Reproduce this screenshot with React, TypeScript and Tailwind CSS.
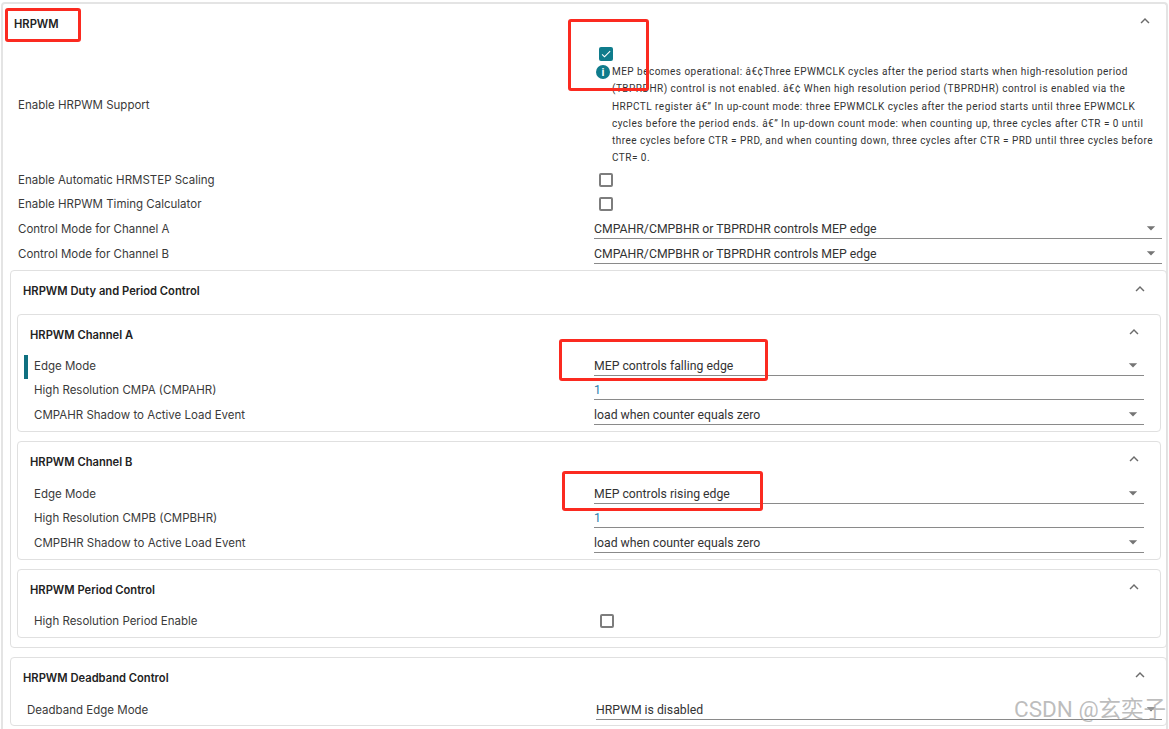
import React from 'react';

const CHANNELS = [
  {
    title: 'HRPWM Channel A',
    edge: 'MEP controls falling edge',
    hrLabel: 'High Resolution CMPA (CMPAHR)',
    shadowLabel: 'CMPAHR Shadow to Active Load Event',
    marked: true,
  },
  {
    title: 'HRPWM Channel B',
    edge: 'MEP controls rising edge',
    hrLabel: 'High Resolution CMPB (CMPBHR)',
    shadowLabel: 'CMPBHR Shadow to Active Load Event',
    marked: false,
  },
];

const HELP_TEXT =
  'MEP becomes operational: â€¢Three EPWMCLK cycles after the period starts when high-resolution period (TBPRDHR) control is not enabled. â€¢ When high resolution period (TBPRDHR) control is enabled via the HRPCTL register â€\u201D In up-count mode: three EPWMCLK cycles after the period starts until three EPWMCLK cycles before the period ends. â€\u201D In up-down count mode: when counting up, three cycles after CTR = 0 until three cycles before CTR = PRD, and when counting down, three cycles after CTR = PRD until three cycles before CTR= 0.';

const Chevron = () => (
  <svg width="18" height="18" viewBox="0 0 24 24" className="fill-[#6b6b6b] mb-[6px]">
    <path d="M12 8l-6 6 1.41 1.41L12 10.83l4.59 4.58L18 14z" />
  </svg>
);

const Checkbox = ({ checked = false }: { checked?: boolean }) =>
  checked ? (
    <div className="w-[14px] h-[14px] rounded-[2px] bg-[#0f7c8c] flex items-center justify-center">
      <svg width="12" height="12" viewBox="0 0 24 24" className="fill-white">
        <path d="M9 16.17L4.83 12l-1.42 1.41L9 19 21 7l-1.41-1.41z" />
      </svg>
    </div>
  ) : (
    <div className="w-[14px] h-[14px] rounded-[2px] border-2 border-[#7d7d7d]" />
  );

const Select = ({ value, arrow = true, blue = false }: { value: string; arrow?: boolean; blue?: boolean }) => (
  <div className="h-[19px] flex items-center justify-between border-b border-[#8a8a8a] font-['Roboto',sans-serif] text-[12.25px]">
    <span className={blue ? 'text-[#2a7fb0]' : 'text-[#333333]'}>{value}</span>
    {arrow && (
      <svg width="20" height="20" viewBox="0 0 24 24" className="fill-[#757575] mr-[1px] mb-[2px]">
        <path d="M7 10l5 5 5-5z" />
      </svg>
    )}
  </div>
);

const Row = ({ label, children, bar = false }: { label: string; children: React.ReactNode; bar?: boolean }) => (
  <div className="relative flex items-center h-[24.5px] text-[11.5px] text-[#3a3a3a]">
    {bar && <div className="absolute left-[-10px] top-[1px] w-[4px] h-[24px] bg-[#0f7080]" />}
    <div className="flex-1">{label}</div>
    {children}
  </div>
);

const Heading = ({ title, height, nudge = false }: { title: string; height: string; nudge?: boolean }) => (
  <div className={`flex items-center justify-between ${height}`}>
    <span className={`text-[11.2px] font-semibold text-[#222222] ${nudge ? 'pt-[2px]' : ''}`}>{title}</span>
    <Chevron />
  </div>
);

const App: React.FC = () => {
  return (
    <div className="relative w-[1169px] h-[729px] overflow-hidden bg-white font-['Inter',sans-serif]">
      {/* outer HRPWM card */}
      <div className="mt-[2px] ml-[1px] mr-[1px] border-2 border-b-0 border-[#e4e4e4] rounded-t-[4px] h-[727px]">
        <div className="pl-[11px] pr-[12px]">
          <Heading title="HRPWM" height="h-[40px]" />
        </div>

        <div className="pl-[15px] pr-[4px]">
          <div className="flex items-center h-[124px] text-[11.5px] text-[#3a3a3a]">
            <div className="flex-1 mb-[1px]">Enable HRPWM Support</div>
            <div className="w-[568px] pl-[2px] self-start mt-[3px]">
              <div className="pl-[3px]">
                <Checkbox checked />
              </div>
              <div className="flex mt-[2px]">
                <div className="w-[14px] h-[14px] mt-[2px] shrink-0 rounded-full bg-[#0f7c8c] text-white flex items-center justify-center text-[11px] font-bold leading-none font-['Roboto',sans-serif]">
                  i
                </div>
                <p className="ml-[2px] pr-[4px] text-[10px] leading-[17.25px] tracking-[0.47px] text-[#333333] font-['Roboto',sans-serif]">
                  {HELP_TEXT}
                </p>
              </div>
            </div>
          </div>
          <div className="flex items-center h-[24px] text-[11.5px] text-[#3a3a3a]">
            <div className="flex-1 pt-[2px]">Enable Automatic HRMSTEP Scaling</div>
            <div className="w-[568px] pl-[5px]">
              <Checkbox />
            </div>
          </div>
          <div className="flex items-center h-[24px] text-[11.5px] text-[#3a3a3a]">
            <div className="flex-1 pt-[2px]">Enable HRPWM Timing Calculator</div>
            <div className="w-[568px] pl-[5px]">
              <Checkbox />
            </div>
          </div>
          <div className="mt-[1px]">
            <Row label="Control Mode for Channel A">
              <div className="w-[568px]">
                <Select value="CMPAHR/CMPBHR or TBPRDHR controls MEP edge" />
              </div>
            </Row>
            <div className="mt-[0.5px]">
              <Row label="Control Mode for Channel B">
                <div className="w-[568px]">
                  <Select value="CMPAHR/CMPBHR or TBPRDHR controls MEP edge" />
                </div>
              </Row>
            </div>
          </div>
        </div>

        {/* Duty and Period */}
        <div className="mt-[3.5px] ml-[7px] mr-[-1px] border border-[#e0e0e0] rounded-[4px] pl-[6px] pr-[5px] h-[378px]">
          <div className="pl-[6px] pr-[12px]">
            <Heading title="HRPWM Duty and Period Control" height="h-[41px]" />
          </div>
          <div className="flex flex-col gap-[9px] mt-[2px]">
            {CHANNELS.map((ch) => (
              <div
                key={ch.title}
                className={`border border-[#e0e0e0] rounded-[4px] ${ch.marked ? 'h-[118px]' : 'h-[119px]'}`}
              >
                <div className="pl-[12px] pr-[17px]">
                  <Heading title={ch.title} height="h-[39px]" nudge />
                </div>
                <div className={`px-[16px] ${ch.marked ? '' : 'pt-[1px]'}`}>
                  <Row label="Edge Mode" bar={ch.marked}>
                    <div className="w-[550px]">
                      <Select value={ch.edge} />
                    </div>
                  </Row>
                  <Row label={ch.hrLabel}>
                    <div className="w-[550px]">
                      <Select value="1" arrow={false} blue />
                    </div>
                  </Row>
                  <Row label={ch.shadowLabel}>
                    <div className="w-[550px]">
                      <Select value="load when counter equals zero" />
                    </div>
                  </Row>
                </div>
              </div>
            ))}
            <div className="border border-[#e0e0e0] rounded-[4px] h-[69px]">
              <div className="pl-[12px] pr-[17px]">
                <Heading title="HRPWM Period Control" height="h-[39px]" nudge />
              </div>
              <div className="px-[16px]">
                <div className="flex items-center h-[24px] text-[11.5px] text-[#3a3a3a]">
                  <div className="flex-1 pt-[2px]">High Resolution Period Enable</div>
                  <div className="w-[550px] pl-[6px]">
                    <Checkbox />
                  </div>
                </div>
              </div>
            </div>
          </div>
        </div>

        {/* Deadband */}
        <div className="mt-[9px] ml-[7px] mr-[-1px] border border-[#e0e0e0] rounded-[4px] h-[69px]">
          <div className="pl-[12px] pr-[17px]">
            <Heading title="HRPWM Deadband Control" height="h-[40px]" />
          </div>
          <div className="pl-[16px] pr-[4px]">
            <Row label="Deadband Edge Mode">
              <div className="w-[566px]">
                <Select value="HRPWM is disabled" />
              </div>
            </Row>
          </div>
        </div>
      </div>

      {/* red annotation boxes */}
      <div className="absolute left-[5px] top-[8px] w-[76px] h-[34px] border-[3px] border-[#fb2a20] rounded-[3px]" />
      <div className="absolute left-[568px] top-[19px] w-[81px] h-[72px] border-[3px] border-[#fb2a20] rounded-[3px]" />
      <div className="absolute left-[559px] top-[339px] w-[209px] h-[42px] border-[3px] border-[#fb2a20] rounded-[3px]" />
      <div className="absolute left-[562px] top-[471px] w-[201px] h-[40px] border-[3px] border-[#fb2a20] rounded-[3px]" />

      {/* watermark */}
      <div className="absolute left-[1014px] top-[694px] whitespace-nowrap text-[22.5px] leading-[30px] text-[#a8a8a8]/75 font-['Roboto','Noto_Sans_CJK_SC',sans-serif]">
        CSDN @玄奕子
      </div>
    </div>
  );
};

export default App;
